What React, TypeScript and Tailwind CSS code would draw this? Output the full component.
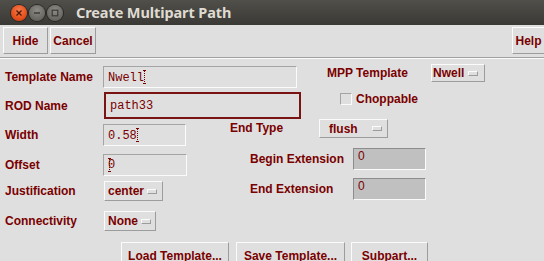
import type { ReactNode } from 'react'

const ui = "font-['Liberation_Sans',Arial,sans-serif] font-bold text-[12px] text-[#7a0000]"
const mono = "font-['Liberation_Mono','Courier_New',monospace] text-[12px] text-[#7a0000]"
const raised = 'border border-t-[#fbfbfb] border-l-[#fbfbfb] border-b-[#9c9c9c] border-r-[#9c9c9c] bg-[#dfdfdf]'
const sunken = 'border border-t-[#a4a4a4] border-l-[#a4a4a4] border-b-[#fbfbfb] border-r-[#fbfbfb]'

function Caret() {
  return (
    <span className="relative inline-block w-[3px] h-[14px] align-[-3px] ml-[-1px]">
      <span className="absolute left-[1px] top-0 h-full border-l border-dotted border-[#7a0000]" />
      <span className="absolute left-0 top-0 w-[3px] border-t border-dotted border-[#7a0000]" />
      <span className="absolute left-0 bottom-0 w-[3px] border-t border-dotted border-[#7a0000]" />
    </span>
  )
}

function Label({ children, className = '' }: { children: ReactNode; className?: string }) {
  return <div className={`flex items-center whitespace-nowrap ${ui} ${className}`}>{children}</div>
}

function Field({ children, className = '' }: { children?: ReactNode; className?: string }) {
  return <div className={`bg-[#dfdfdf] ${sunken} pl-[4px] pt-[3px] leading-[14px] ${mono} ${className}`}>{children}</div>
}

function Menu({ text, className = '' }: { text: string; className?: string }) {
  return (
    <div className={`flex items-center ${raised} ${ui} ${className}`}>
      <span>{text}</span>
      <span className={`w-[10px] h-[5px] ${raised} border-b-[#8c8c8c] border-r-[#8c8c8c]`} />
    </div>
  )
}

function ToolButton({ children, className = '' }: { children: ReactNode; className?: string }) {
  return <button className={`h-[27px] flex items-center justify-center ${raised} ${ui} ${className}`}>{children}</button>
}

function WinDot({ kind }: { kind: 'close' | 'min' | 'max' }) {
  if (kind === 'close')
    return (
      <div className="w-[16px] h-[16px] rounded-full bg-[radial-gradient(circle_at_50%_35%,#f77b4c,#e5501c_60%,#b93a10)] flex items-center justify-center shadow-[0_0_0_1px_#2a2926]">
        <svg width="8" height="8" viewBox="0 0 8 8">
          <path d="M1.5 1.5 L6.5 6.5 M6.5 1.5 L1.5 6.5" stroke="#4a1a08" strokeWidth="1.3" />
        </svg>
      </div>
    )
  return (
    <div className="w-[16px] h-[16px] rounded-full bg-[radial-gradient(circle_at_50%_35%,#8c8b86,#6c6b66_60%,#54534e)] flex items-center justify-center shadow-[0_0_0_1px_#2a2926]">
      <svg width="8" height="8" viewBox="0 0 8 8">
        {kind === 'min' ? (
          <path d="M1 4 L7 4" stroke="#3a3935" strokeWidth="1.4" />
        ) : (
          <rect x="1.2" y="1.2" width="5.6" height="5.6" fill="none" stroke="#3a3935" strokeWidth="1.2" />
        )}
      </svg>
    </div>
  )
}

export default function App() {
  return (
    <div className="w-[544px] h-[261px] overflow-hidden bg-[#dfdfdf]">
      {/* window title */}
      <div className="h-[25px] flex items-center bg-gradient-to-b from-[#514f4a] to-[#3a3935] pl-[11px]">
        <div className="flex items-center gap-[2px]">
          <WinDot kind="close" />
          <WinDot kind="min" />
          <WinDot kind="max" />
        </div>
        <span className="ml-[13px] font-['Noto_Sans',sans-serif] font-bold text-[14.5px] text-[#dfdbd2] tracking-[-0.1px]">Create Multipart Path</span>
      </div>

      {/* toolbar */}
      <div className="h-[33px] border-b border-[#a0a0a0] shadow-[0_1px_0_#fbfbfb] flex items-start pt-[2px] px-[3px]">
        <ToolButton className="w-[45px]">Hide</ToolButton>
        <ToolButton className="w-[46px] ml-[2px]">Cancel</ToolButton>
        <ToolButton className="w-[33px] ml-auto mr-[-4px]">Help</ToolButton>
      </div>

      <div className="mt-[1px] pl-[5px]">
        {/* row A */}
        <div className="flex items-start h-[29px]">
          <Label className="w-[98px] h-[22px] mt-[7px]">Template Name</Label>
          <Field className="w-[194px] h-[22px] mt-[7px]">Nwell<Caret /></Field>
          <Label className="ml-[30px] w-[104px] h-[18px] mt-[5px]">MPP Template</Label>
          <Menu text="Nwell" className="w-[54px] h-[18px] mt-[5px] pl-[1px] gap-[4px]" />
        </div>

        {/* row B */}
        <div className="flex items-start h-[31px]">
          <Label className="w-[99px] h-[27px] mt-[4px]">ROD Name</Label>
          <div className={`w-[197px] h-[27px] mt-[4px] border-2 border-[#7a1414] bg-[#dfdfdf] pl-[4px] pt-[5px] leading-[14px] ${mono}`}>path33</div>
          <div className={`ml-[39px] mt-[5px] w-[12px] h-[12px] ${sunken} bg-[#dfdfdf]`} />
          <Label className="ml-[4px] h-[12px] mt-[5px]">Choppable</Label>
        </div>

        {/* row C */}
        <div className="flex items-start h-[29px]">
          <Label className="w-[98px] h-[22px] mt-[5px]">Width</Label>
          <Field className="w-[83px] h-[22px] mt-[5px]">0.58<Caret /></Field>
          <Label className="ml-[44px] w-[89px] h-[18px]">End Type</Label>
          <Menu text="flush" className="w-[69px] h-[19px] pl-[9px] gap-[14px]" />
        </div>

        {/* row D */}
        <div className="flex items-start h-[30px]">
          <Label className="w-[98px] h-[22px] mt-[6px]">Offset</Label>
          <Field className="w-[84px] h-[22px] mt-[6px]"><span className="relative">0<span className="absolute left-[1px] top-0"><Caret /></span></span></Field>
          <Label className="ml-[63px] w-[103px] h-[22px]">Begin Extension</Label>
          <div className={`w-[73px] h-[22px] bg-[#c0c0c0] border border-t-[#8c8c8c] border-l-[#8c8c8c] border-b-[#fbfbfb] border-r-[#fbfbfb] pl-[4px] leading-[14px] font-['Liberation_Sans',Arial,sans-serif] text-[12px] text-[#7a0000]`}>0</div>
        </div>

        {/* row E */}
        <div className="flex items-start h-[23px]">
          <Label className="w-[99px] h-[20px] mt-[3px]">Justification</Label>
          <Menu text="center" className="w-[59px] h-[20px] mt-[3px] pl-[3px] gap-[3px]" />
          <Label className="ml-[87px] w-[103px] h-[22px]">End Extension</Label>
          <div className={`w-[73px] h-[22px] bg-[#c0c0c0] border border-t-[#8c8c8c] border-l-[#8c8c8c] border-b-[#fbfbfb] border-r-[#fbfbfb] pl-[4px] leading-[14px] font-['Liberation_Sans',Arial,sans-serif] text-[12px] text-[#7a0000]`}>0</div>
        </div>

        {/* row F */}
        <div className="flex items-start h-[30px]">
          <Label className="w-[99px] h-[20px] mt-[10px]">Connectivity</Label>
          <Menu text="None" className="w-[52px] h-[20px] mt-[10px] pl-[3px] gap-[3px]" />
        </div>

        {/* bottom buttons */}
        <div className="flex items-start pt-[11px] pl-[116px]">
          <ToolButton className="w-[108px] h-[24px]">Load Template...</ToolButton>
          <ToolButton className="w-[109px] h-[24px] ml-[7px]">Save Template...</ToolButton>
          <ToolButton className="w-[77px] h-[24px] ml-[6px]">Subpart...</ToolButton>
        </div>
      </div>
    </div>
  )
}
